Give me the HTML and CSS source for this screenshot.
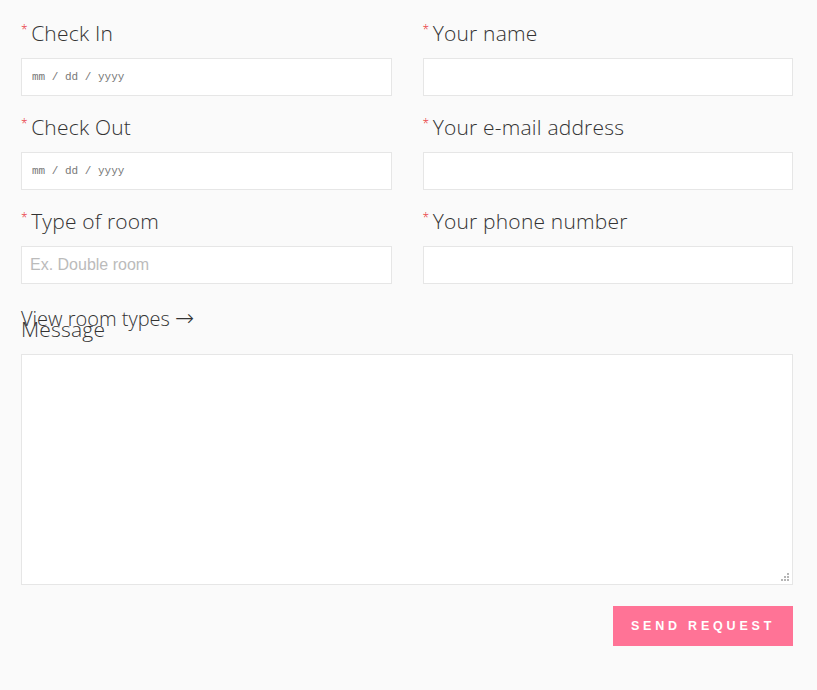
FILE: index.html
```html
<!DOCTYPE html>
<html lang="en">
<head>
    <meta charset="UTF-8">
    <meta name="viewport" content="width=device-width, initial-scale=1.0">
    <title>Booking request</title>
    <link rel="stylesheet" href="styles.css">
</head>
<body>

<!-- Booking Form -->
<form class="booking-form" id="booking-form">
    <div class="form-grid">
        <div class="form-col">
            <div class="field">
                <label for="check-in"><span class="req">* </span>Check In</label>
                <input type="text" id="check-in" class="date-input" placeholder="mm / dd / yyyy">
            </div>
            <div class="field">
                <label for="check-out"><span class="req">* </span>Check Out</label>
                <input type="text" id="check-out" class="date-input" placeholder="mm / dd / yyyy">
            </div>
            <div class="field">
                <label for="room-type"><span class="req">* </span>Type of room</label>
                <input type="text" id="room-type" placeholder="Ex. Double room">
            </div>
            <a class="room-link" href="#">View room types <span class="arrow">&rarr;</span></a>
        </div>

        <div class="form-col">
            <div class="field">
                <label for="name"><span class="req">* </span>Your name</label>
                <input type="text" id="name">
            </div>
            <div class="field">
                <label for="email"><span class="req">* </span>Your e-mail address</label>
                <input type="text" id="email">
            </div>
            <div class="field">
                <label for="phone"><span class="req">* </span>Your phone number</label>
                <input type="text" id="phone">
            </div>
        </div>
    </div>

    <!-- Message -->
    <div class="field message-field">
        <label for="message">Message</label>
        <div class="textarea-wrap">
            <textarea id="message"></textarea>
            <!-- resize grip -->
            <svg class="grip" width="8" height="8" viewBox="0 0 8 8">
                <rect x="6" y="0" width="2" height="2" fill="#b5b5b5"/>
                <rect x="3" y="3" width="2" height="2" fill="#b5b5b5"/>
                <rect x="6" y="3" width="2" height="2" fill="#b5b5b5"/>
                <rect x="0" y="6" width="2" height="2" fill="#b5b5b5"/>
                <rect x="3" y="6" width="2" height="2" fill="#b5b5b5"/>
                <rect x="6" y="6" width="2" height="2" fill="#b5b5b5"/>
            </svg>
        </div>
    </div>

    <div class="form-actions">
        <button type="submit">Send request</button>
    </div>
</form>

</body>
</html>
```

FILE: styles.css
```css
body {
    font-family: "Open Sans", "Liberation Sans", sans-serif;
    background-color: #fafafa;
    color: #333;
    margin: 0;
    padding: 18px 0 0 21px;
}

.booking-form {
    width: 772px;
}

.form-grid {
    display: grid;
    grid-template-columns: 1fr 1fr;
    column-gap: 31px;
}

.field {
    margin-bottom: 16px;
}

label {
    display: block;
    font-size: 21px;
    font-weight: 300;
    letter-spacing: 0.2px;
    line-height: 30px;
    margin-bottom: 10px;
    color: #333;
}

.req {
    color: #e8282f;
    font-size: 12px;
    line-height: 0;
    vertical-align: 7px;
}

input {
    display: block;
    box-sizing: border-box;
    width: 100%;
    height: 38px;
    padding: 0 8px;
    border: 1px solid #e6e6e6;
    background-color: #fff;
    font-family: "Liberation Sans", Arial, sans-serif;
    font-size: 16px;
    color: #333;
    outline: none;
}

input::placeholder {
    color: #bbb;
}

.date-input {
    padding-left: 10px;
    font-family: "Liberation Mono", monospace;
    font-size: 11px;
}

.date-input::placeholder {
    color: #777;
}

.room-link {
    display: block;
    margin-top: 20px;
    margin-bottom: -20px;
    font-size: 20px;
    font-weight: 300;
    line-height: 30px;
    color: #333;
    text-decoration: none;
}

.arrow {
    font-family: "DejaVu Sans", sans-serif;
    font-size: 23px;
    font-weight: 200;
    line-height: 0;
}

.message-field {
    margin-bottom: 21px;
}

.textarea-wrap {
    position: relative;
}

textarea {
    display: block;
    box-sizing: border-box;
    width: 100%;
    height: 231px;
    border: 1px solid #e6e6e6;
    background-color: #fff;
    outline: none;
    resize: none;
}

.grip {
    position: absolute;
    right: 4px;
    bottom: 4px;
}

.form-actions {
    display: flex;
    justify-content: flex-end;
}

button {
    width: 180px;
    height: 40px;
    padding: 0;
    border: none;
    background-color: #ff7396;
    color: #fff;
    font-family: "Liberation Sans", Arial, sans-serif;
    font-size: 12.5px;
    font-weight: bold;
    letter-spacing: 3.8px;
    text-transform: uppercase;
    cursor: pointer;
}
```
